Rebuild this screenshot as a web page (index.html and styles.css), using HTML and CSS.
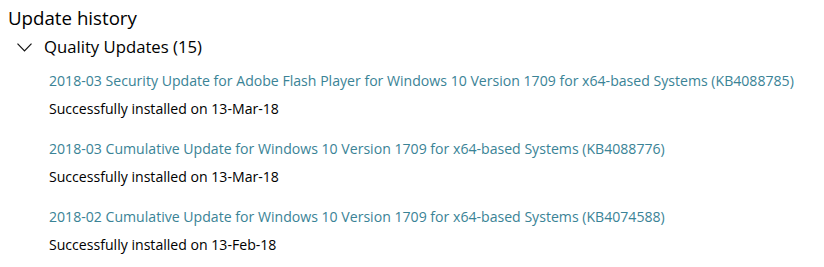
FILE: index.html
```html
<!DOCTYPE html>
<html>
<head>
<meta charset="utf-8">
<link rel="stylesheet" href="styles.css">
</head>
<body>
<div class="page">
  <h1 class="title">Update history</h1>
  <div class="group">
    <div class="group-header">
      <svg class="chevron" width="15" height="9" viewBox="0 0 15 9"><path d="M0.5 0.7 L7.5 7.8 L14.5 0.7" fill="none" stroke="#111" stroke-width="1.2"/></svg>
      <span class="group-label">Quality Updates (15)</span>
    </div>
    <ul class="updates">
      <li class="update">
        <a class="update-link" href="#">2018-03 Security Update for Adobe Flash Player for Windows 10 Version 1709 for x64-based Systems (KB4088785)</a>
        <div class="update-status">Successfully installed on 13-Mar-18</div>
      </li>
      <li class="update">
        <a class="update-link" href="#">2018-03 Cumulative Update for Windows 10 Version 1709 for x64-based Systems (KB4088776)</a>
        <div class="update-status">Successfully installed on 13-Mar-18</div>
      </li>
      <li class="update">
        <a class="update-link" href="#">2018-02 Cumulative Update for Windows 10 Version 1709 for x64-based Systems (KB4074588)</a>
        <div class="update-status">Successfully installed on 13-Feb-18</div>
      </li>
    </ul>
  </div>
</div>
</body>
</html>
```
FILE: styles.css
```css
html, body {
  margin: 0;
  padding: 0;
  background: #fff;
}
body {
  font-family: "Open Sans", "Noto Sans", sans-serif;
  color: #000;
}
.page {
  padding: 4px 0 0 8px;
}
.title {
  margin: 0;
  font-size: 18.7px;
  font-weight: 400;
  line-height: 28px;
}
.group-header {
  margin-top: 4px;
  display: flex;
  align-items: center;
  gap: 12px;
  padding-left: 9px;
  height: 22px;
}
.chevron {
  display: block;
}
.group-label {
  font-size: 16.7px;
  line-height: 22px;
}
.updates {
  list-style: none;
  margin: 12px 0 0;
  padding: 0 0 0 41px;
  display: flex;
  flex-direction: column;
  gap: 18px;
}
.update {
  display: flex;
  flex-direction: column;
  gap: 6px;
}
.update-link {
  color: #3a8396;
  text-decoration: none;
  font-size: 14.1px;
  line-height: 22px;
  align-self: flex-start;
}
.update-status {
  font-size: 14.1px;
  line-height: 22px;
}
```
